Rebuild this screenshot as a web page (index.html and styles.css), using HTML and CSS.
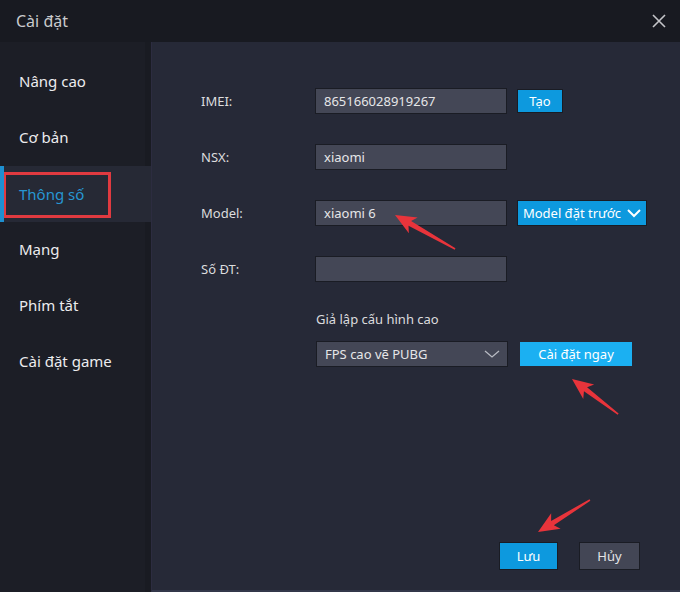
FILE: index.html
```html
<!DOCTYPE html>
<html>
<head>
    <meta charset="UTF-8">
    <title>Cài đặt</title>
    <link rel="stylesheet" href="styles.css">
</head>
<body>
    <div class="dialog">
        <header class="title-bar">
            <span class="title">Cài đặt</span>
            <svg class="close" width="16" height="16" viewBox="0 0 16 16">
                <path d="M2 2 L14 14 M14 2 L2 14" stroke="#c4c5c9" stroke-width="1.6" fill="none"/>
            </svg>
        </header>
        <div class="main">
            <nav class="sidebar">
                <div class="nav-item">Nâng cao</div>
                <div class="nav-item">Cơ bản</div>
                <div class="nav-item active"><span class="mark">Thông số</span></div>
                <div class="nav-item">Mạng</div>
                <div class="nav-item">Phím tắt</div>
                <div class="nav-item">Cài đặt game</div>
            </nav>
            <section class="content">
                <div class="row">
                    <label class="label">IMEI:</label>
                    <div class="field">865166028919267</div>
                    <button class="btn btn-small">Tạo</button>
                </div>
                <div class="row">
                    <label class="label">NSX:</label>
                    <div class="field">xiaomi</div>
                </div>
                <div class="row">
                    <label class="label">Model:</label>
                    <div class="field">xiaomi 6</div>
                    <button class="btn btn-preset">Model đặt trước
                        <svg width="14" height="10" viewBox="0 0 14 10">
                            <path d="M1 2 L7 8 L13 2" stroke="#ffffff" stroke-width="2" fill="none"/>
                        </svg>
                    </button>
                </div>
                <div class="row">
                    <label class="label">Số ĐT:</label>
                    <div class="field"></div>
                </div>
                <div class="sub-title">Giả lập cấu hình cao</div>
                <div class="row-select">
                    <div class="field select">FPS cao vẽ PUBG
                        <svg width="16" height="10" viewBox="0 0 16 10">
                            <path d="M1 2 L8 8 L15 2" stroke="#b8bac2" stroke-width="1.3" fill="none"/>
                        </svg>
                    </div>
                    <button class="btn btn-apply">Cài đặt ngay</button>
                </div>
                <div class="footer">
                    <button class="btn btn-save">Lưu</button>
                    <button class="btn btn-cancel">Hủy</button>
                </div>
            </section>
        </div>
        <!-- mũi tên chú thích -->
        <svg class="notes" width="680" height="592" viewBox="0 0 680 592">
            <g fill="#e8343b">
                <polygon transform="translate(395 215) rotate(29.5)" points="0,0 21,-9 17,-2.6 69,-0.8 69,0.8 17,2.6 21,9"/>
                <polygon transform="translate(572 379) rotate(37.3)" points="0,0 21,-9 17,-2.6 58,-0.8 58,0.8 17,2.6 21,9"/>
                <polygon transform="translate(538 532) rotate(-31.6)" points="0,0 21,-9 17,-2.6 61,-0.8 61,0.8 17,2.6 21,9"/>
            </g>
        </svg>
    </div>
</body>
</html>
```

FILE: styles.css
```css
/* Hộp thoại cài đặt */
body {
    margin: 0;
    background-color: #1b1d25;
    font-family: "Noto Sans", "Open Sans", sans-serif;
    color: #e4e4e6;
}

.dialog {
    position: relative;
    width: 680px;
    height: 592px;
    display: flex;
    flex-direction: column;
    overflow: hidden;
}

.title-bar {
    height: 42px;
    background-color: #181a21;
    display: flex;
    align-items: center;
    justify-content: space-between;
    padding: 0 13px 0 16px;
}

.title {
    font-size: 16px;
    color: #c9cacd;
}

.close {
    display: block;
}

.main {
    flex: 1;
    display: flex;
}

.sidebar {
    flex-shrink: 0;
    width: 151px;
    padding-top: 12px;
    background-color: #1c1e26;
    box-shadow: inset -6px 0 0 #191b22;
}

.nav-item {
    box-sizing: border-box;
    height: 56px;
    display: flex;
    align-items: center;
    padding-left: 19px;
    padding-bottom: 3px;
    font-size: 15px;
    color: #ececee;
}

.nav-item.active {
    background-color: #262935;
    border-left: 4px solid #1e90d0;
    padding-left: 0;
    padding-bottom: 0;
    color: #2797d3;
}

.mark {
    width: 89px;
    height: 38px;
    margin-top: 2px;
    display: flex;
    align-items: center;
    padding-left: 13px;
    padding-bottom: 2px;
    border: 3px solid #e03a40;
    border-left-width: 2px;
}

.content {
    flex: 1;
    min-width: 0;
    background-color: #262937;
    border-left: 1px solid #2c2c40;
    border-bottom: 2px solid #33374a;
    padding: 46px 30px 20px 49px;
    display: flex;
    flex-direction: column;
}

.row {
    display: flex;
    align-items: center;
    height: 26px;
    margin-bottom: 30px;
}

.label {
    flex-shrink: 0;
    width: 114px;
    font-size: 13px;
    color: #dcdcde;
}

.field {
    flex-shrink: 0;
    box-sizing: border-box;
    width: 192px;
    height: 26px;
    background-color: #444756;
    border: 1px solid #1a1c24;
    padding-left: 8px;
    font-size: 13px;
    color: #e6e6e8;
    display: flex;
    align-items: center;
}

.btn {
    flex-shrink: 0;
    border: none;
    font-family: "Noto Sans", "Open Sans", sans-serif;
    font-size: 13px;
    color: #ffffff;
    background-color: #0d99de;
    padding: 0;
    display: flex;
    align-items: center;
    justify-content: center;
}

.btn-small {
    margin-left: 10px;
    width: 46px;
    height: 24px;
    border: 1px solid #1a1c24;
}

.btn-preset {
    margin-left: 10px;
    width: 130px;
    height: 26px;
    gap: 6px;
    border: 1px solid #1a1c24;
}

.sub-title {
    margin-left: 115px;
    margin-top: -2px;
    font-size: 13px;
    color: #dcdcde;
}

.row-select {
    display: flex;
    align-items: center;
    margin-top: 13px;
    margin-left: 115px;
}

.select {
    justify-content: space-between;
    padding-right: 7px;
}

.btn-apply {
    margin-left: 12px;
    width: 112px;
    height: 24px;
    background-color: #1bb0f2;
}

.footer {
    margin-top: auto;
    margin-right: 10px;
    display: flex;
    justify-content: flex-end;
    gap: 21px;
}

.btn-save {
    width: 59px;
    height: 28px;
    border: 1px solid #1a1c24;
}

.btn-cancel {
    width: 61px;
    height: 28px;
    background-color: #434655;
    border: 1px solid #1a1c24;
    color: #e4e4e6;
}

.notes {
    position: absolute;
    left: 0;
    top: 0;
    pointer-events: none;
}
```
